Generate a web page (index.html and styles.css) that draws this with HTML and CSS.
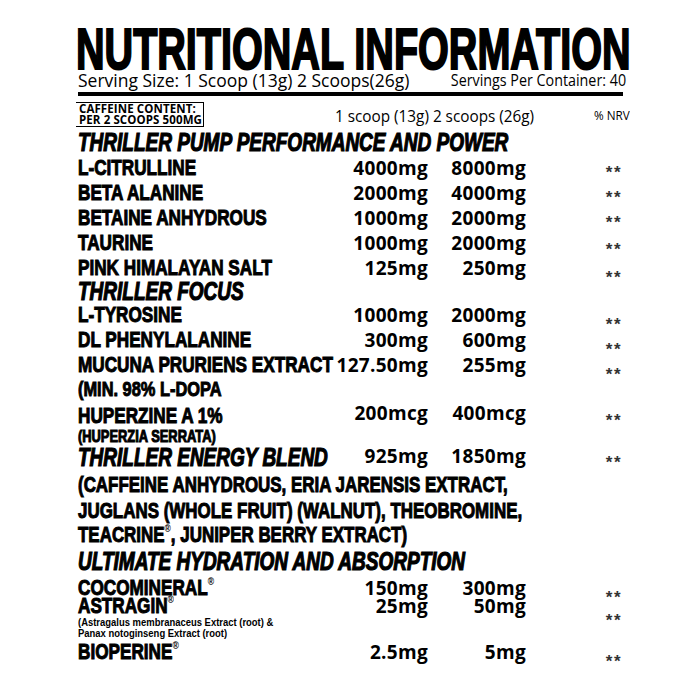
FILE: index.html
```html
<!DOCTYPE html>
<html lang="en">
<head>
<meta charset="utf-8">
<title>Nutritional Information</title>
<link rel="stylesheet" href="styles.css">
</head>
<body>
<div class="label">
  <h1 class="title"><span>NUTRITIONAL INFORMATION</span></h1>
  <div class="serving">
    <span class="ss">Serving Size: 1 Scoop (13g) 2 Scoops(26g)</span>
    <span class="spc">Servings Per Container: 40</span>
  </div>
  <div class="rule"></div>
  <div class="head">
    <div class="caff">CAFFEINE CONTENT:<br>PER 2 SCOOPS 500MG</div>
    <div class="colhead"><span>1 scoop (13g) 2 scoops (26g)</span></div>
    <div class="nrv"><span>% NRV</span></div>
  </div>

  <div class="sec s1"><span>THRILLER PUMP PERFORMANCE AND POWER</span></div>
  <div class="row"><div class="nm"><span>L-CITRULLINE</span></div><div class="v">4000mg</div><div class="v">8000mg</div><div class="st">**</div></div>
  <div class="row"><div class="nm"><span>BETA ALANINE</span></div><div class="v">2000mg</div><div class="v">4000mg</div><div class="st">**</div></div>
  <div class="row"><div class="nm"><span>BETAINE ANHYDROUS</span></div><div class="v">1000mg</div><div class="v">2000mg</div><div class="st">**</div></div>
  <div class="row"><div class="nm"><span>TAURINE</span></div><div class="v">1000mg</div><div class="v">2000mg</div><div class="st lo">**</div></div>
  <div class="row"><div class="nm"><span>PINK HIMALAYAN SALT</span></div><div class="v">125mg</div><div class="v">250mg</div><div class="st lower">**</div></div>

  <div class="sec s2"><span>THRILLER FOCUS</span></div>
  <div class="row"><div class="nm"><span>L-TYROSINE</span></div><div class="v">1000mg</div><div class="v">2000mg</div><div class="st lower">**</div></div>
  <div class="row"><div class="nm"><span>DL PHENYLALANINE</span></div><div class="v">300mg</div><div class="v">600mg</div><div class="st lower">**</div></div>
  <div class="row"><div class="nm"><span>MUCUNA PRURIENS EXTRACT</span></div><div class="v">127.50mg</div><div class="v">255mg</div><div class="st lower">**</div></div>
  <div class="row min"><div class="nm"><span>(MIN. 98% L-DOPA</span></div></div>
  <div class="row hup"><div class="nm"><span>HUPERZINE A 1%</span></div><div class="v up">200mcg</div><div class="v up">400mcg</div><div class="st">**</div></div>
  <div class="row note"><div class="nm"><span>(HUPERZIA SERRATA)</span></div></div>

  <div class="row energy"><div class="sec-in"><span>THRILLER ENERGY BLEND</span></div><div class="v">925mg</div><div class="v">1850mg</div><div class="st lo">**</div></div>
  <div class="blend b1"><span>(CAFFEINE ANHYDROUS, ERIA JARENSIS EXTRACT,</span></div>
  <div class="blend b2"><span>JUGLANS (WHOLE FRUIT) (WALNUT), THEOBROMINE,</span></div>
  <div class="blend b3"><span>TEACRINE<sup class="reg">®</sup>, JUNIPER BERRY EXTRACT)</span></div>

  <div class="sec s3"><span>ULTIMATE HYDRATION AND ABSORPTION</span></div>
  <div class="row coco"><div class="nm"><span>COCOMINERAL<sup class="reg">®</sup></span></div><div class="v">150mg</div><div class="v">300mg</div><div class="st lower">**</div></div>
  <div class="row astra"><div class="nm"><span>ASTRAGIN<sup class="reg">®</sup></span></div><div class="v">25mg</div><div class="v">50mg</div><div class="st lowest">**</div></div>
  <div class="tiny"><span>(Astragalus membranaceus Extract (root) &amp;</span></div>
  <div class="tiny"><span>Panax notoginseng Extract (root)</span></div>
  <div class="row bio"><div class="nm"><span>BIOPERINE<sup class="reg">®</sup></span></div><div class="v">2.5mg</div><div class="v">5mg</div><div class="st lower">**</div></div>
</div>
</body>
</html>
```
FILE: styles.css
```css
* { box-sizing: border-box; }

body {
  margin: 0;
  background: #fff;
  color: #000;
  font-family: "Liberation Sans", Arial, sans-serif;
}

.label {
  width: 554px;
  margin-left: 76px;
  padding: 27px 0 0 2px;
  overflow: hidden;
}

.title {
  margin: 0 0 0 -2px;
  height: 45px;
  font: bold 57px/45px "Liberation Sans", sans-serif;
  white-space: nowrap;
}
.title span {
  display: inline-block;
  transform: scaleX(0.694);
  transform-origin: left center;
  -webkit-text-stroke: 2px #000;
}

.serving {
  display: flex;
  justify-content: space-between;
  width: 548px;
  height: 16px;
  line-height: 16px;
  font-family: "Open Sans", sans-serif;
  white-space: nowrap;
}
.ss {
  display: inline-block;
  font-size: 17.5px;
}
.spc {
  display: inline-block;
  font-size: 16px;
  transform: scaleX(0.894);
  transform-origin: right center;
}

.rule {
  width: 545px;
  height: 4px;
  margin-top: 4px;
  background: #000;
}

.head,
.row {
  display: grid;
  grid-template-columns: 255px 95px 98px 104px;
  white-space: nowrap;
}
.head {
  align-items: center;
  height: 25px;
  margin-top: 6px;
}
.caff {
  width: 129px;
  height: 25px;
  margin-left: -3px;
  padding: 0 0 0 3px;
  border: 1.5px solid #000;
  font: bold 11.5px/11px "Open Sans", sans-serif;
  letter-spacing: 0.1px;
}
.colhead {
  grid-column: 2 / 4;
  padding: 2px 0 0 2px;
  font: 17px/23px "Open Sans", sans-serif;
}
.colhead span {
  display: inline-block;
  transform: scaleX(0.9);
  transform-origin: left center;
}
.nrv {
  text-align: right;
  padding-top: 2px;
  font: 13px/23px "Open Sans", sans-serif;
}
.nrv span {
  display: inline-block;
  transform: scaleX(0.9);
  transform-origin: right center;
}

.sec, .sec-in {
  font: italic bold 25px "Liberation Sans", sans-serif;
  white-space: nowrap;
}
.sec span, .sec-in span {
  display: inline-block;
  transform: scaleX(0.76);
  transform-origin: left center;
  -webkit-text-stroke: 1.2px #000;
}
.s1 { height: 25px; line-height: 25px; margin-top: 3px; }
.s2 { height: 22px; line-height: 22px; }
.s3 { height: 28px; line-height: 28px; }

.row {
  height: 25px;
  line-height: 25px;
}
.nm {
  font: bold 22px "Liberation Sans", sans-serif;
}
.nm span, .blend span {
  display: inline-block;
  transform: scaleX(0.78);
  transform-origin: left center;
  -webkit-text-stroke: 1px #000;
}
.blend span { transform: scaleX(0.77); }
.v {
  text-align: right;
  font: bold 19px "Open Sans", sans-serif;
  letter-spacing: 0.3px;
}
.v.up { margin-top: -3px; }
.st {
  text-align: right;
  padding: 8px 8px 0 0;
  font: bold 17px "Liberation Sans", sans-serif;
  color: #333;
  letter-spacing: 1.5px;
}
.st.lo { padding-top: 10px; }
.st.lower { padding-top: 13px; }
.st.lowest { padding-top: 18px; }

.row.min { height: 26px; line-height: 26px; }
.row.min .nm { font-size: 21px; }
.row.hup { height: 24px; line-height: 24px; }
.row.note { height: 16px; line-height: 16px; }
.row.note .nm { font-size: 16.5px; }
.row.energy { height: 28px; line-height: 28px; }

.blend {
  font: bold 22px "Liberation Sans", sans-serif;
  white-space: nowrap;
}
.b1 { height: 28px; line-height: 28px; }
.b2, .b3 { height: 24px; line-height: 24px; }

.row.coco { height: 18px; line-height: 18px; }
.row.astra { height: 24px; line-height: 24px; }
.row.bio { height: 34px; line-height: 34px; }

.tiny {
  height: 11px;
  font: bold 10.5px/11px "Liberation Sans", sans-serif;
  white-space: nowrap;
}
.tiny span {
  display: inline-block;
  transform: scaleX(0.9);
  transform-origin: left center;
}

.reg {
  font-size: 0.5em;
  line-height: 0;
  vertical-align: 0.9em;
  -webkit-text-stroke: 0;
}
```
